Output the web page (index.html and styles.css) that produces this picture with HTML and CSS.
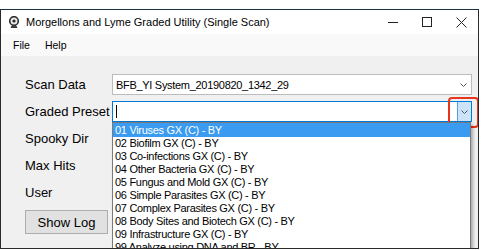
FILE: index.html
```html
<!DOCTYPE html>
<html lang="en">
<head>
    <meta charset="UTF-8">
    <title>Morgellons and Lyme Graded Utility (Single Scan)</title>
    <link rel="stylesheet" href="styles.css">
</head>
<body>
    <div class="window">
        <div class="titlebar">
            <svg class="app-icon" width="13" height="13" viewBox="0 0 13 13">
                <circle cx="6" cy="5" r="4.3" fill="#e8e8e8" stroke="#2b2b2b" stroke-width="1.6"/>
                <circle cx="6" cy="5" r="1.6" fill="#2b2b2b"/>
                <path d="M2.5 12 L9.5 12 L8 9 L4 9 Z" fill="#3a3a3a"/>
            </svg>
            <span class="title">Morgellons and Lyme Graded Utility (Single Scan)</span>
            <div class="controls">
                <span class="ctl">
                    <svg width="10" height="10" viewBox="0 0 10 10"><line x1="0" y1="5.5" x2="10" y2="5.5" stroke="#222" stroke-width="1"/></svg>
                </span>
                <span class="ctl">
                    <svg width="10" height="10" viewBox="0 0 10 10"><rect x="0.5" y="0.5" width="9" height="9" fill="none" stroke="#222" stroke-width="1"/></svg>
                </span>
                <span class="ctl">
                    <svg width="11" height="11" viewBox="0 0 11 11"><path d="M0.5 0.5 L10.5 10.5 M10.5 0.5 L0.5 10.5" stroke="#222" stroke-width="1"/></svg>
                </span>
            </div>
        </div>
        <div class="menubar">
            <span class="menu-item">File</span>
            <span class="menu-item">Help</span>
        </div>
        <div class="content">
            <div class="form">
                <label>Scan Data</label>
                <div class="combo">
                    <span class="combo-text">BFB_YI System_20190820_1342_29</span>
                    <span class="arrow">
                        <svg width="7" height="4" viewBox="0 0 7 4"><polyline points="0.5,0.5 3.5,3.5 6.5,0.5" fill="none" stroke="#555" stroke-width="1"/></svg>
                    </span>
                </div>

                <label>Graded Preset</label>
                <div class="combo focused">
                    <span class="combo-text"><span class="caret"></span></span>
                    <span class="arrow pressed">
                        <svg width="7" height="4" viewBox="0 0 7 4"><polyline points="0.5,0.5 3.5,3.5 6.5,0.5" fill="none" stroke="#555" stroke-width="1"/></svg>
                    </span>
                    <div class="marker"></div>
                    <ul class="dropdown">
                        <li class="selected">01 Viruses GX (C) - BY</li>
                        <li>02 Biofilm GX (C) - BY</li>
                        <li>03 Co-infections GX (C) - BY</li>
                        <li>04 Other Bacteria GX (C) - BY</li>
                        <li>05 Fungus and Mold GX (C) - BY</li>
                        <li>06 Simple Parasites GX (C) - BY</li>
                        <li>07 Complex Parasites GX (C) - BY</li>
                        <li>08 Body Sites and Biotech GX (C) - BY</li>
                        <li>09 Infrastructure GX (C) - BY</li>
                        <li>99 Analyze using DNA and BR - BY</li>
                    </ul>
                </div>

                <label>Spooky Dir</label>
                <div></div>

                <label>Max Hits</label>
                <div></div>

                <label>User</label>
                <div></div>
            </div>
            <button class="show-log">Show Log</button>
        </div>
    </div>
</body>
</html>
```

FILE: styles.css
```css
body {
    margin: 0;
    background-color: #fff;
    font-family: "Liberation Sans", Arial, sans-serif;
    color: #000;
}
.window {
    margin-top: 9px;
    width: 477px;
    height: 238px;
    border: 1px solid #2a2a2a;
    border-top-color: #1c3146;
    background-color: #f0f0f0;
    display: flex;
    flex-direction: column;
    overflow: hidden;
}
.titlebar {
    height: 24px;
    background-color: #fff;
    display: flex;
    align-items: center;
    flex-shrink: 0;
}
.app-icon {
    margin-left: 7px;
    margin-right: 5px;
}
.title {
    font-size: 11px;
    color: #000;
}
.controls {
    margin-left: auto;
    display: flex;
    height: 100%;
}
.ctl {
    width: 34px;
    display: flex;
    align-items: center;
    justify-content: center;
}
.menubar {
    height: 22px;
    background-color: #f9f9f9;
    display: flex;
    align-items: center;
    padding-left: 5px;
    flex-shrink: 0;
}
.menu-item {
    font-size: 10.5px;
    padding: 0 7px;
    margin-right: 1px;
}
.content {
    flex: 1;
    padding: 18px 0 0 24px;
}
.form {
    display: grid;
    grid-template-columns: 87px 360px;
    grid-auto-rows: 21px;
    row-gap: 6px;
    align-items: center;
}
.form label {
    font-size: 13px;
    white-space: nowrap;
}
.combo {
    position: relative;
    height: 21px;
    box-sizing: border-box;
    border: 1px solid #bcbcbc;
    background-color: #fff;
    display: flex;
    align-items: stretch;
}
.combo.focused {
    border-color: #0078d7;
}
.combo-text {
    flex: 1;
    font-size: 11px;
    letter-spacing: -0.3px;
    padding-left: 3px;
    display: flex;
    align-items: center;
}
.caret {
    width: 1px;
    height: 13px;
    background-color: #000;
}
.arrow {
    width: 13px;
    display: flex;
    align-items: center;
    justify-content: center;
    margin-right: 1px;
}
.arrow.pressed {
    background-color: #cce4f7;
    border-left: 1px solid #569de5;
    margin-right: 0;
}
.marker {
    position: absolute;
    left: 335px;
    top: -5px;
    width: 27px;
    height: 27px;
    border: 2px solid #e8341c;
    border-radius: 4px;
}
.dropdown {
    position: absolute;
    top: 20px;
    left: -1px;
    width: 359px;
    height: 140px;
    box-sizing: border-box;
    margin: 0;
    padding: 0;
    list-style: none;
    background-color: #fff;
    border: 1px solid #7a7a7a;
    box-shadow: 2px 2px 3px rgba(0, 0, 0, 0.3);
}
.dropdown li {
    font-size: 11px;
    letter-spacing: -0.3px;
    height: 13px;
    line-height: 13px;
    padding-left: 2px;
    white-space: nowrap;
}
.dropdown li.selected {
    height: 14px;
    line-height: 14px;
    background-color: #3a9bf0;
    color: #fff;
}
.show-log {
    margin-top: 7px;
    width: 83px;
    height: 24px;
    font-family: "Liberation Sans", Arial, sans-serif;
    font-size: 13px;
    color: #000;
    background-color: #e1e1e1;
    border: 1px solid #adadad;
    padding: 0;
}
```
